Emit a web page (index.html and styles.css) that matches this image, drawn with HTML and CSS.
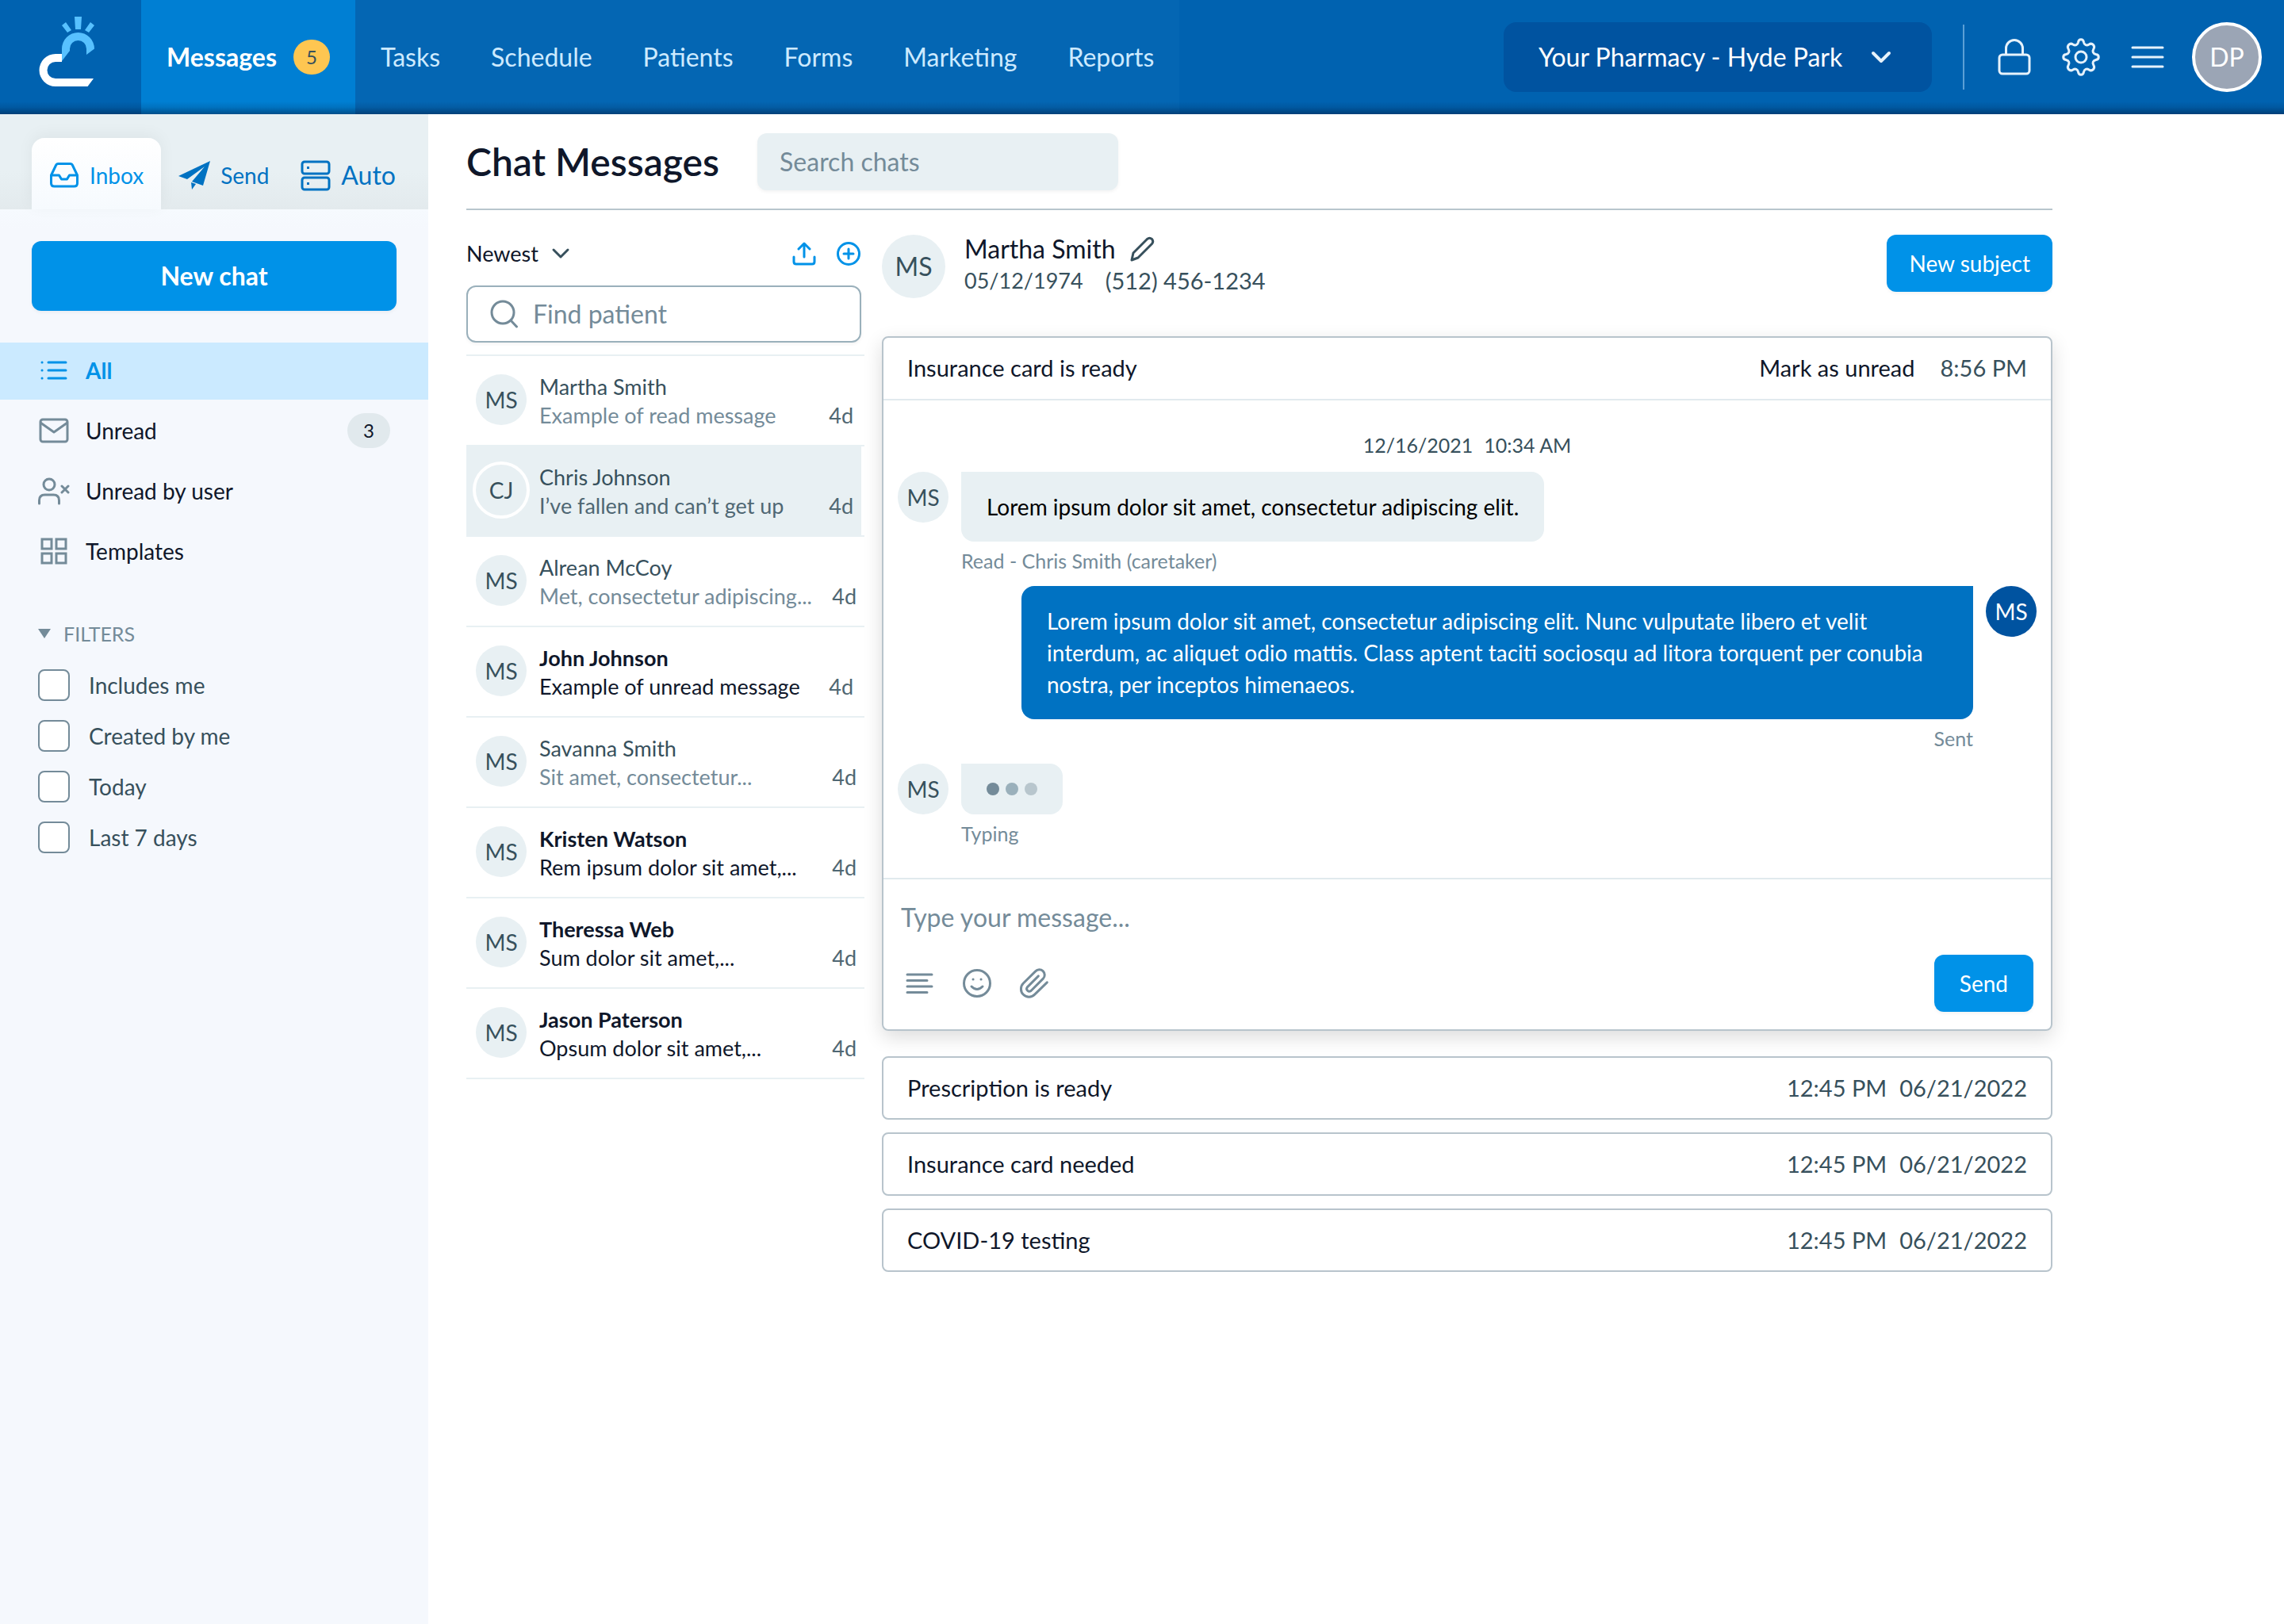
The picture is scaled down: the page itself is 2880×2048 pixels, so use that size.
FILE: index.html
```html
<!DOCTYPE html>
<html lang="en">
<head>
<meta charset="utf-8">
<meta name="viewport" content="width=device-width, initial-scale=1">
<title>Chat Messages</title>
<link rel="stylesheet" href="styles.css">
</head>
<body>
<header class="topbar">
  <a class="logo" href="#" aria-label="Home">
    <svg width="72" height="92" viewBox="48 19 72 92" aria-hidden="true">
      <path fill="#fff" d="M78 68H70A20.500 20.500 0 0 0 70 109H110.500L118 99H70A10.500 10.500 0 0 1 70 78H78Z"/>
      <path fill="#57c1ff" d="M78 77V61.500A20.500 20.500 0 0 1 119 61.500L109 69V61.500A10.500 10.500 0 0 0 88 61.500V64ZM94 21H103L102 37H95ZM78 32L83 28L90 38L85 41ZM114 28L119 32L112 41L107 38Z"/>
    </svg>
  </a>
  <nav class="nav" aria-label="Main">
    <a class="nav-link nav-link--active" href="#">Messages <span class="nav-badge">5</span></a>
    <a class="nav-link" href="#">Tasks</a>
    <a class="nav-link" href="#">Schedule</a>
    <a class="nav-link" href="#">Patients</a>
    <a class="nav-link" href="#">Forms</a>
    <a class="nav-link" href="#">Marketing</a>
    <a class="nav-link" href="#">Reports</a>
  </nav>
  <div class="topbar-tools">
    <div class="location">
      <select class="location-select" aria-label="Pharmacy location"><option>Your Pharmacy - Hyde Park</option></select>
      <svg class="location-arrow" width="26" height="18" viewBox="0 0 26 18" aria-hidden="true"><path d="M3 4L13 14L23 4" fill="none" stroke="#e6f2fb" stroke-width="4" stroke-linecap="round" stroke-linejoin="round"/></svg>
    </div>
    <div class="topbar-icons">
      <button class="icon-btn" aria-label="Lock">
        <svg width="48" height="48" viewBox="0 0 48 48" fill="none" stroke="#e6f2fb" stroke-width="3"><rect x="5" y="21" width="38" height="24" rx="4"/><path d="M13.500 21V13a10.500 10.500 0 0 1 21 0V21"/></svg>
      </button>
      <button class="icon-btn" aria-label="Settings">
        <svg width="48" height="48" viewBox="0 0 48 48" fill="none" stroke="#e6f2fb" stroke-width="3" stroke-linejoin="round"><circle cx="24" cy="24" r="7"/><path d="M20.500 5.200C21.200 .600 26.800 .600 27.500 5.200C28.200 8.800 31 10 34.200 8C38 5.300 42.300 9.800 39.900 13.700C38 16.800 39.200 19.700 42.800 20.500C47.400 21.200 47.400 26.800 42.800 27.500C39.200 28.300 38 31.200 39.900 34.300C42.300 38.200 38 42.700 34.200 40C31 38 28.200 39.200 27.500 42.800C26.800 47.400 21.200 47.400 20.500 42.800C19.800 39.200 17 38 13.800 40C10 42.700 5.700 38.200 8.100 34.300C10 31.200 8.800 28.300 5.200 27.500C.600 26.800 .600 21.200 5.200 20.500C8.800 19.700 10 16.800 8.100 13.700C5.700 9.800 10 5.300 13.800 8C17 10 19.800 8.800 20.500 5.200Z"/></svg>
      </button>
      <button class="icon-btn" aria-label="Menu">
        <svg width="48" height="48" viewBox="0 0 48 48" stroke="#e6f2fb" stroke-width="3" stroke-linecap="round"><path d="M5 12H43M5 24H43M5 36H43"/></svg>
      </button>
    </div>
    <button class="user" aria-label="Account">DP</button>
  </div>
</header>

<div class="layout">
  <aside class="sidebar">
    <nav class="tabs" aria-label="Message boxes">
      <a class="tab tab--active" href="#">
        <svg width="38" height="34" viewBox="0 0 38 34" fill="none" stroke="currentColor" stroke-width="3" stroke-linejoin="round"><path d="M2.500 17L8.500 4.500Q9.300 2.500 11.500 2.500H26.500Q28.700 2.500 29.500 4.500L35.500 17V27Q35.500 31 31.500 31H6.500Q2.500 31 2.500 27ZM2.500 17H12.500L15.500 22H22.500L25.500 17H35.500"/></svg>
        Inbox</a>
      <a class="tab" href="#">
        <svg width="40" height="36" viewBox="0 0 40 36" fill="currentColor"><path d="M40 0L0 19L11 23L33 7L17 26L31 31ZM16 27L17 36L22 29Z"/></svg>
        Send</a>
      <a class="tab tab--large" href="#">
        <svg width="38" height="40" viewBox="0 0 38 40" fill="none" stroke="currentColor" stroke-width="3"><rect x="2" y="3" width="34" height="15" rx="3"/><rect x="2" y="23" width="34" height="15" rx="3"/><path d="M8 10.500h3M8 30.500h3"/></svg>
        Auto</a>
    </nav>
    <div class="new-chat"><button class="btn btn--large">New chat</button></div>
    <nav class="folders" aria-label="Folders">
      <a class="folder folder--active" href="#">
        <svg width="40" height="40" viewBox="0 0 40 40" fill="none" stroke="currentColor" stroke-width="3" stroke-linecap="round"><path d="M13 10H35M13 20H35M13 30H35M5 10h.1M5 20h.1M5 30h.1"/></svg>
        All</a>
      <a class="folder" href="#">
        <svg width="40" height="40" viewBox="0 0 40 40" fill="none" stroke="currentColor" stroke-width="3" stroke-linejoin="round"><rect x="3" y="6" width="34" height="28" rx="3"/><path d="M3 10L20 22L37 10"/></svg>
        Unread <span class="count">3</span></a>
      <a class="folder" href="#">
        <svg width="40" height="40" viewBox="0 0 40 40" fill="none" stroke="currentColor" stroke-width="3" stroke-linecap="round"><ellipse cx="14" cy="12" rx="7" ry="7"/><path d="M1.500 36V32Q1.500 25 8.500 25H19.500Q26.500 25 26.500 32V36M30 14L38 22M38 14L30 22"/></svg>
        Unread by user</a>
      <a class="folder" href="#">
        <svg width="40" height="40" viewBox="0 0 40 40" fill="none" stroke="currentColor" stroke-width="3"><path d="M5 5H17V17H5ZM23 5H35V17H23ZM5 23H17V35H5ZM23 23H35V35H23Z"/></svg>
        Templates</a>
    </nav>
    <fieldset class="filters">
      <legend class="filters-title"><svg width="16" height="12" viewBox="0 0 16 12" aria-hidden="true"><path fill="currentColor" d="M0 0H16L8 12Z"/></svg>FILTERS</legend>
      <label class="filter"><input class="check" type="checkbox">Includes me</label>
      <label class="filter"><input class="check" type="checkbox">Created by me</label>
      <label class="filter"><input class="check" type="checkbox">Today</label>
      <label class="filter"><input class="check" type="checkbox">Last 7 days</label>
    </fieldset>
  </aside>

  <main class="main">
    <div class="page-head">
      <h1 class="page-title">Chat Messages</h1>
      <input class="search" type="search" placeholder="Search chats" aria-label="Search chats">
    </div>
    <div class="columns">
      <section class="list" aria-label="Chats">
        <div class="list-head">
          <div class="sort">
            <select class="sort-select" aria-label="Sort order"><option>Newest</option></select>
            <svg class="sort-arrow" width="24" height="16" viewBox="0 0 24 16" aria-hidden="true"><path d="M3 3L12 12L21 3" fill="none" stroke="#37505c" stroke-width="3" stroke-linecap="round" stroke-linejoin="round"/></svg>
          </div>
          <div class="list-actions">
            <button class="icon-btn" aria-label="Export"><svg width="32" height="32" viewBox="0 0 32 32" fill="none" stroke="#0092e8" stroke-width="3" stroke-linecap="round" stroke-linejoin="round"><path d="M3 20V26Q3 29 6 29H26Q29 29 29 26V20M16 20V4M9 10L16 3L23 10"/></svg></button>
            <button class="icon-btn" aria-label="Add"><svg width="32" height="32" viewBox="0 0 32 32" fill="none" stroke="#0092e8" stroke-width="3" stroke-linecap="round"><circle cx="16" cy="16" r="13.500"/><path d="M10 16H22M16 10V22"/></svg></button>
          </div>
        </div>
        <label class="find">
          <svg width="36" height="36" viewBox="0 0 36 36" fill="none" stroke="#748b99" stroke-width="3" stroke-linecap="round"><circle cx="16" cy="16" r="14"/><path d="M26 26L33.500 34"/></svg>
          <input class="find-input" type="text" placeholder="Find patient" aria-label="Find patient">
        </label>
        <ul class="chats">
          <li class="chat"><a class="chat-link chat-link--narrow" href="#"><span class="avatar">MS</span><span class="chat-text"><span class="chat-name">Martha Smith</span><span class="chat-msg">Example of read message</span></span><time class="chat-age">4d</time></a></li>
          <li class="chat"><a class="chat-link chat-link--narrow chat-link--selected" href="#"><span class="avatar avatar--ring">CJ</span><span class="chat-text"><span class="chat-name">Chris Johnson</span><span class="chat-msg">I’ve fallen and can’t get up</span></span><time class="chat-age">4d</time></a></li>
          <li class="chat"><a class="chat-link" href="#"><span class="avatar">MS</span><span class="chat-text"><span class="chat-name">Alrean McCoy</span><span class="chat-msg">Met, consectetur adipiscing...</span></span><time class="chat-age">4d</time></a></li>
          <li class="chat chat--unread"><a class="chat-link chat-link--narrow" href="#"><span class="avatar">MS</span><span class="chat-text"><span class="chat-name">John Johnson</span><span class="chat-msg">Example of unread message</span></span><time class="chat-age">4d</time></a></li>
          <li class="chat"><a class="chat-link" href="#"><span class="avatar">MS</span><span class="chat-text"><span class="chat-name">Savanna Smith</span><span class="chat-msg">Sit amet, consectetur...</span></span><time class="chat-age">4d</time></a></li>
          <li class="chat chat--unread"><a class="chat-link" href="#"><span class="avatar">MS</span><span class="chat-text"><span class="chat-name">Kristen Watson</span><span class="chat-msg">Rem ipsum dolor sit amet,...</span></span><time class="chat-age">4d</time></a></li>
          <li class="chat chat--unread"><a class="chat-link" href="#"><span class="avatar">MS</span><span class="chat-text"><span class="chat-name">Theressa Web</span><span class="chat-msg">Sum dolor sit amet,...</span></span><time class="chat-age">4d</time></a></li>
          <li class="chat chat--unread"><a class="chat-link" href="#"><span class="avatar">MS</span><span class="chat-text"><span class="chat-name">Jason Paterson</span><span class="chat-msg">Opsum dolor sit amet,...</span></span><time class="chat-age">4d</time></a></li>
        </ul>
      </section>

      <section class="detail" aria-label="Conversation">
        <div class="patient">
          <span class="avatar avatar--large">MS</span>
          <div class="patient-info">
            <h2 class="patient-name">Martha Smith
              <button class="icon-btn" aria-label="Edit name"><svg width="32" height="32" viewBox="0 0 32 32" fill="none" stroke="#37505c" stroke-width="3" stroke-linejoin="round"><path d="M2 30L4 21L21.500 3.500Q24.500 1 27.500 3.500Q30 6.500 27.500 9.500L10 27Z"/></svg></button>
            </h2>
            <p class="patient-meta"><span class="patient-birth">05/12/1974</span><span>(512) 456-1234</span></p>
          </div>
          <button class="btn">New subject</button>
        </div>

        <article class="thread">
          <header class="thread-head">
            <h3 class="subject">Insurance card is ready</h3>
            <button class="text-btn">Mark as unread</button>
            <time class="stamp">8:56 PM</time>
          </header>
          <div class="thread-body">
            <p class="thread-date"><span>12/16/2021</span><span>10:34 AM</span></p>
            <div class="message">
              <span class="avatar">MS</span>
              <div class="message-col">
                <p class="bubble">Lorem ipsum dolor sit amet, consectetur adipiscing elit.</p>
                <p class="status">Read - Chris Smith (caretaker)</p>
              </div>
            </div>
            <div class="message message--out">
              <div class="message-col">
                <p class="bubble bubble--out">Lorem ipsum dolor sit amet, consectetur adipiscing elit. Nunc vulputate libero et velit interdum, ac aliquet odio mattis. Class aptent taciti sociosqu ad litora torquent per conubia nostra, per inceptos himenaeos.</p>
                <p class="status">Sent</p>
              </div>
              <span class="avatar avatar--dark">MS</span>
            </div>
            <div class="message">
              <span class="avatar">MS</span>
              <div class="message-col">
                <div class="bubble bubble--typing"><span class="dot"></span><span class="dot dot--mid"></span><span class="dot dot--light"></span></div>
                <p class="status">Typing</p>
              </div>
            </div>
          </div>
          <form class="composer">
            <textarea class="composer-input" rows="1" placeholder="Type your message..." aria-label="Message"></textarea>
            <div class="composer-bar">
              <button class="icon-btn" type="button" aria-label="Insert template"><svg width="40" height="40" viewBox="0 0 40 40" stroke="#748b99" stroke-width="3" stroke-linecap="round"><path d="M4 9H35M4 16.500H29M4 24H35M4 31.500H29"/></svg></button>
              <button class="icon-btn" type="button" aria-label="Emoji"><svg width="40" height="40" viewBox="0 0 40 40" fill="none" stroke="#748b99" stroke-width="3" stroke-linecap="round"><circle cx="20" cy="20" r="16.500"/><path d="M13 24Q20 31 27 24M15 15h.1M25 15h.1"/></svg></button>
              <button class="icon-btn" type="button" aria-label="Attach file"><svg width="40" height="40" viewBox="0 0 24 24" fill="none" stroke="#748b99" stroke-width="1.800" stroke-linecap="round" stroke-linejoin="round"><path d="M21.800 11.300L12.400 20.500A6 6 0 0 1 3.800 12L13 2.900A4 4 0 0 1 18.800 8.500L9.600 17.700A2 2 0 0 1 6.800 14.900L15.200 6.500"/></svg></button>
              <button class="btn btn--send" type="submit">Send</button>
            </div>
          </form>
        </article>

        <div class="subjects">
          <a class="subject-row" href="#"><span class="subject">Prescription is ready</span><span class="stamps"><time>12:45 PM</time><time>06/21/2022</time></span></a>
          <a class="subject-row" href="#"><span class="subject">Insurance card needed</span><span class="stamps"><time>12:45 PM</time><time>06/21/2022</time></span></a>
          <a class="subject-row" href="#"><span class="subject">COVID-19 testing</span><span class="stamps"><time>12:45 PM</time><time>06/21/2022</time></span></a>
        </div>
      </section>
    </div>
  </main>
</div>
</body>
</html>
```

FILE: styles.css
```css
* { box-sizing: border-box; }
body {
  margin: 0;
  min-height: 100vh;
  display: flex;
  flex-direction: column;
  background: #fff;
  color: #0f172a;
  font-family: Lato, "Liberation Sans", sans-serif;
  font-size: 28px;
  line-height: 36px;
}
h1, h2, h3, p, ul, fieldset, legend { margin: 0; padding: 0; font-weight: 400; font-size: inherit; }
ul { list-style: none; }
fieldset { border: 0; min-width: 0; }
a { color: inherit; text-decoration: none; }
button, input, select, textarea { font: inherit; color: inherit; margin: 0; }
button { cursor: pointer; }
svg { display: block; flex: none; }
::placeholder { color: #748b99; opacity: 1; }

.icon-btn, .text-btn { padding: 0; border: 0; background: none; }

.btn {
  height: 72px;
  padding: 0 28px;
  border: 0;
  border-radius: 12px;
  background: #0092e8;
  color: #fff;
  box-shadow: 0 2px 4px rgba(0, 0, 0, .05);
}
.btn--large { width: 100%; height: 88px; font-size: 32px; font-weight: 700; }
.btn--send { margin-left: auto; padding: 0 32px; }

/* Top bar */
.topbar { position: relative; display: flex; height: 144px; background: #0062b0; color: #cdeaff; font-size: 32px; }
.topbar::after {
  content: "";
  position: absolute;
  inset: auto 0 0 0;
  height: 16px;
  background: linear-gradient(rgba(0, 20, 50, 0), rgba(0, 20, 50, .12) 45%, rgba(0, 20, 50, .45));
  pointer-events: none;
}
.logo { width: 178px; padding: 19px 0 0 48px; }
.nav { display: flex; background: #0466b3; }
.nav-link { display: flex; align-items: center; gap: 22px; padding: 0 32px; }
.nav-link--active { gap: 21px; background: #007fd3; color: #fff; font-weight: 700; }
.nav-badge {
  width: 46px;
  border-radius: 22px;
  background: #fec651;
  color: #37505c;
  font-size: 24px;
  font-weight: 400;
  line-height: 44px;
  text-align: center;
}
.topbar-tools { display: flex; align-items: center; margin-left: auto; padding-right: 28px; }
.location { display: grid; align-items: center; }
.location > * { grid-area: 1 / 1; }
.location-select {
  appearance: none;
  width: 540px;
  height: 88px;
  padding: 0 44px;
  border: 0;
  border-radius: 16px;
  background: #0053a0;
  color: #fff;
}
.location-arrow { justify-self: end; margin-right: 51px; pointer-events: none; }
.topbar-icons {
  display: flex;
  align-items: center;
  gap: 36px;
  height: 82px;
  margin: 0 32px 0 39px;
  padding-left: 39px;
  border-left: 2px solid #5b9fd6;
}
.user {
  width: 88px;
  height: 88px;
  padding: 0;
  border: 4px solid #fff;
  border-radius: 50%;
  background: #9ba5b5;
  color: #fff;
}

/* Page frame */
.layout { flex: 1; display: flex; }
.sidebar { flex: none; width: 540px; background: #f5f8fd; }
.main { flex: 1; min-width: 0; max-width: 2048px; padding: 0 0 48px 48px; }

/* Sidebar */
.tabs {
  display: flex;
  align-items: flex-end;
  height: 120px;
  padding-left: 40px;
  background: linear-gradient(#e8f0f3 60%, #e3eaed);
  color: #0072c2;
}
.tab { display: flex; align-items: center; gap: 13px; height: 90px; padding-top: 4px; padding-left: 22px; }
.tab--active {
  padding: 4px 22px 0;
  border-radius: 16px 16px 0 0;
  background: linear-gradient(#fff, #f6fafe);
  color: #0092e8;
  box-shadow: 0 -4px 20px rgba(0, 0, 0, .05);
}
.tab--large { padding-left: 40px; font-size: 32px; }
.new-chat { padding: 40px; background: linear-gradient(#f6fafe, #f5f8fd 24px); }
.folders { display: grid; gap: 4px; }
.folder { display: flex; align-items: center; gap: 20px; height: 72px; padding: 0 48px 2px; }
.folder svg { color: #748b99; }
.folder--active, .folder--active svg { color: #0092e8; }
.folder--active { background: #cbeaff; font-weight: 700; }
.count {
  width: 54px;
  margin-left: auto;
  border-radius: 22px;
  background: #e1e9ed;
  font-size: 24px;
  line-height: 44px;
  text-align: center;
}
.filters { padding: 46px 48px; color: #37505c; }
.filters-title { display: flex; align-items: center; gap: 16px; padding-top: 49px; color: #748b99; font-size: 25px; line-height: 36px; }
.filter { display: flex; align-items: center; gap: 24px; height: 64px; }
.filters-title + .filter { margin-top: -31px; }
.check { appearance: none; width: 40px; height: 40px; border: 2px solid #748b99; border-radius: 8px; background: #fff; }
.check:checked { background: #0092e8; }

/* Page heading */
.page-head { display: flex; align-items: center; gap: 48px; height: 121px; border-bottom: 2px solid #b8c6cd; }
.page-title { font-size: 48px; font-weight: 600; line-height: 60px; }
.search {
  appearance: none;
  width: 455px;
  height: 72px;
  padding: 0 28px;
  border: 0;
  border-radius: 12px;
  background: #e8f0f3;
  font-size: 32px;
  box-shadow: 0 2px 4px rgba(0, 0, 0, .05);
}
.columns { display: flex; align-items: flex-start; gap: 22px; padding-top: 31px; }

/* Chat list */
.list { flex: none; width: 502px; font-size: 27px; }
.list-head { display: flex; align-items: center; justify-content: space-between; height: 48px; padding-right: 4px; }
.sort { display: grid; align-items: center; }
.sort > * { grid-area: 1 / 1; }
.sort-select { appearance: none; padding: 0 40px 0 0; border: 0; background: none; }
.sort-arrow { justify-self: end; pointer-events: none; }
.list-actions { display: flex; gap: 24px; }
.find {
  display: flex;
  align-items: center;
  gap: 18px;
  height: 72px;
  margin: 16px 4px 15px 0;
  padding: 0 28px;
  border: 2px solid #9ab0bb;
  border-radius: 12px;
  box-shadow: 0 2px 4px rgba(0, 0, 0, .05);
}
.find-input { flex: 1; min-width: 0; padding: 0; border: 0; outline: 0; background: none; font-size: 32px; }
.chats { border-top: 2px solid #e8f0f3; }
.chat { border-bottom: 2px solid #e8f0f3; color: #37505c; }
.chat-link { display: flex; align-items: center; height: 112px; padding: 0 10px 2px 12px; }
.chat-link--narrow { margin-right: 4px; }
.chat-link--selected { padding-left: 8px; background: #e8f0f3; }
.chat-text { flex: 1; min-width: 0; display: grid; padding: 4px 0 0 16px; }
.chat-link--selected .chat-text { padding-left: 12px; }
.chat-name, .chat-msg { white-space: nowrap; }
.chat-msg { color: #748b99; }
.chat-link--selected .chat-msg { color: #4f6773; }
.chat-age { align-self: flex-end; padding-bottom: 17px; color: #4f6773; }
.chat--unread { color: #0f172a; }
.chat--unread .chat-name { font-weight: 700; }
.chat--unread .chat-msg { color: #0f172a; }

.avatar {
  flex: none;
  width: 64px;
  height: 64px;
  border-radius: 50%;
  background: #e8f0f3;
  color: #37505c;
  font-size: 28px;
  line-height: 64px;
  text-align: center;
}
.avatar--ring { width: 72px; height: 72px; border: 4px solid #fff; }
.avatar--large { width: 80px; height: 80px; font-size: 32px; line-height: 80px; }
.avatar--dark { background: #0053a0; color: #fff; }

/* Conversation */
.detail { flex: 1; min-width: 0; }
.patient { display: flex; align-items: flex-start; margin-bottom: 48px; }
.patient-info { flex: 1; padding-left: 24px; }
.patient-name { display: flex; align-items: center; gap: 18px; height: 36px; font-size: 32px; }
.patient-meta { display: flex; gap: 28px; line-height: 44px; font-size: 29px; color: #37505c; }
.patient-birth { font-size: 27px; }

.thread {
  border: 2px solid #b8c4cc;
  border-radius: 8px;
  box-shadow: 0 8px 24px rgba(0, 0, 0, .14);
}
.thread-head { display: flex; align-items: center; height: 79px; padding: 0 30px 2px; border-bottom: 2px solid #e1eaee; font-size: 29px; }
.subject { flex: 1; }
.stamp { margin-left: 32px; color: #37505c; }
.thread-body { display: grid; gap: 16px; padding: 38px 18px 40px; }
.thread-date { display: flex; justify-content: center; gap: 14px; color: #37505c; font-size: 25px; }
.message { display: flex; align-items: flex-start; gap: 16px; }
.message--out { justify-content: flex-end; }
.message--out .message-col { max-width: 1200px; text-align: right; }
.bubble { padding: 24px 32px; border-radius: 0 16px 16px 16px; background: #e8f0f3; color: #000; line-height: 40px; }
.bubble--out { border-radius: 16px 0 16px 16px; background: #0072c2; color: #fff; text-align: left; }
.bubble--typing { display: flex; align-items: center; gap: 8px; width: 128px; height: 64px; }
.dot { width: 16px; height: 16px; border-radius: 50%; background: #748b99; }
.dot--mid { background: #9ab0bb; }
.dot--light { background: #b8c6cd; }
.status { padding-top: 8px; color: #748b99; font-size: 25px; line-height: 32px; }

.composer { border-top: 2px solid #e1eaee; padding: 24px 22px 22px; }
.composer-input { display: block; width: 100%; height: 48px; padding: 0; border: 0; outline: 0; resize: none; background: none; font-size: 32px; line-height: 48px; overflow: hidden; }
.composer-bar { display: flex; align-items: center; gap: 32px; padding: 23px 0 0 4px; }

.subjects { display: grid; gap: 16px; padding-top: 32px; }
.subject-row { display: flex; align-items: center; height: 80px; padding: 0 30px; border: 2px solid #b8c4cc; border-radius: 8px; font-size: 29px; }
.stamps { display: flex; gap: 16px; color: #37505c; }
```
